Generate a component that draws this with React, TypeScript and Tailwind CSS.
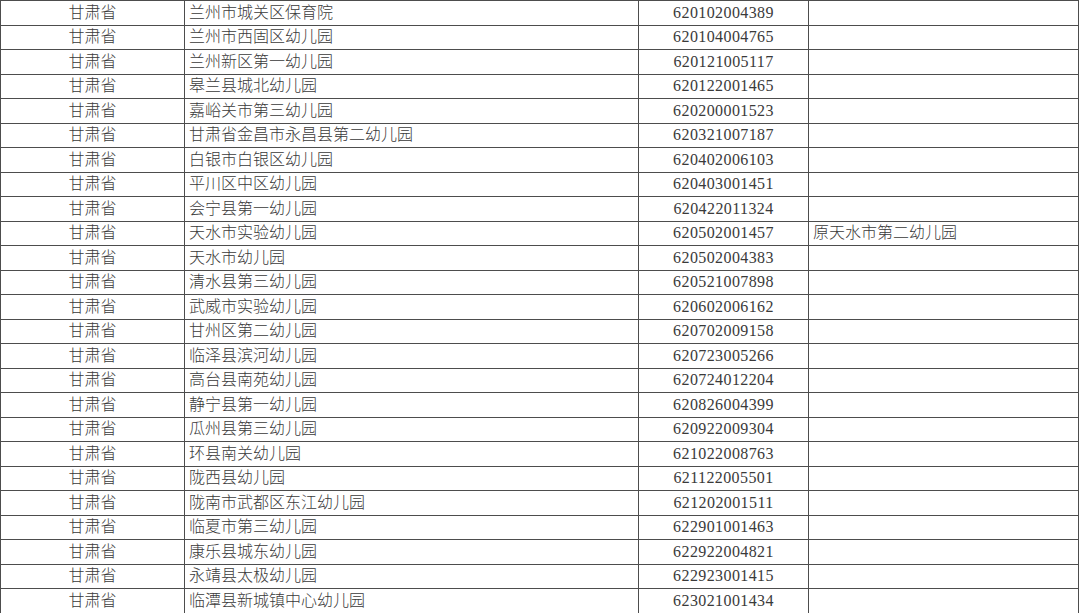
import React from "react";

const rows: [string, string, string][] = [
  ["兰州市城关区保育院", "620102004389", ""],
  ["兰州市西固区幼儿园", "620104004765", ""],
  ["兰州新区第一幼儿园", "620121005117", ""],
  ["皋兰县城北幼儿园", "620122001465", ""],
  ["嘉峪关市第三幼儿园", "620200001523", ""],
  ["甘肃省金昌市永昌县第二幼儿园", "620321007187", ""],
  ["白银市白银区幼儿园", "620402006103", ""],
  ["平川区中区幼儿园", "620403001451", ""],
  ["会宁县第一幼儿园", "620422011324", ""],
  ["天水市实验幼儿园", "620502001457", "原天水市第二幼儿园"],
  ["天水市幼儿园", "620502004383", ""],
  ["清水县第三幼儿园", "620521007898", ""],
  ["武威市实验幼儿园", "620602006162", ""],
  ["甘州区第二幼儿园", "620702009158", ""],
  ["临泽县滨河幼儿园", "620723005266", ""],
  ["高台县南苑幼儿园", "620724012204", ""],
  ["静宁县第一幼儿园", "620826004399", ""],
  ["瓜州县第三幼儿园", "620922009304", ""],
  ["环县南关幼儿园", "621022008763", ""],
  ["陇西县幼儿园", "621122005501", ""],
  ["陇南市武都区东江幼儿园", "621202001511", ""],
  ["临夏市第三幼儿园", "622901001463", ""],
  ["康乐县城东幼儿园", "622922004821", ""],
  ["永靖县太极幼儿园", "622923001415", ""],
  ["临潭县新城镇中心幼儿园", "623021001434", ""],
];

export default function App() {
  return (
    <div className="w-[1080px] h-[613px] overflow-hidden bg-white">
      <table
        className="border-collapse table-fixed w-[1079px] text-[16px] text-[#3a3a3a] font-light"
        style={{ fontFamily: '"Liberation Serif", "Noto Sans CJK SC", serif' }}
      >
        <colgroup>
          <col className="w-[184px]" />
          <col className="w-[454px]" />
          <col className="w-[170px]" />
          <col className="w-[270px]" />
        </colgroup>
        <tbody>
          {rows.map(([name, code, note], i) => (
            <tr key={i} className="h-[24.5px]">
              <td className="border border-[#4d4d4d] text-center p-0 leading-none">甘肃省</td>
              <td className="border border-[#4d4d4d] pl-[4px] p-0 leading-none">{name}</td>
              <td className="border border-[#4d4d4d] text-center p-0 leading-none tracking-[0.4px]">{code}</td>
              <td className="border border-[#4d4d4d] pl-[4px] p-0 leading-none">{note}</td>
            </tr>
          ))}
        </tbody>
      </table>
    </div>
  );
}
